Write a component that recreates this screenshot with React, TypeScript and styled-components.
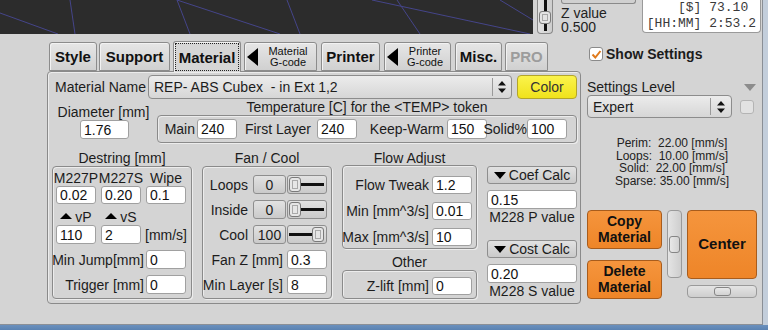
import styled, { createGlobalStyle } from 'styled-components'

const GlobalStyle = createGlobalStyle`
  html, body {
    margin: 0;
    padding: 0;
  }
  body {
    font-family: "Liberation Sans", Arial, sans-serif;
    font-size: 14px;
    color: #1c1c1c;
  }
`

const viewLines = [
  [0, 13, 58, 34],
  [70, 0, 75, 34],
  [177, 0, 190, 34],
  [177, 0, 280, 34],
  [287, 0, 300, 34],
  [372, 0, 530, 34],
  [397, 0, 420, 34],
  [500, 0, 533, 20],
]

const SelectArrows = () => (
  <svg width="8" height="12" viewBox="0 0 8 12">
    <path d="M0 4.5 L4 0 L8 4.5 Z M0 7.5 L8 7.5 L4 12 Z" fill="#111" />
  </svg>
)

const CheckMark = () => (
  <svg width="11" height="11" viewBox="0 0 11 11">
    <path d="M1.5 5.5 L4.3 8.5 L9.5 2" stroke="#e07a1c" strokeWidth="2" fill="none" />
  </svg>
)

const App = () => {
  return (
    <Frame>
      <GlobalStyle />
      <Window>
        <TopBar>
          <Viewport>
            <svg width="533" height="34">
              {viewLines.map(([x1, y1, x2, y2], i) => (
                <line key={i} x1={x1} y1={y1} x2={x2} y2={y2} stroke="#45458a" strokeWidth="1" />
              ))}
            </svg>
          </Viewport>
          <ZSlider>
            <ZTrack $h={11} />
            <ZThumb />
            <ZTrack $h={7} />
          </ZSlider>
          <ZInfo>
            <CutButton />
            <ZText>Z value</ZText>
            <ZText>0.500</ZText>
          </ZInfo>
          <StatsBox>{'[$] 73.10 \n[HH:MM] 2:53.2'}</StatsBox>
        </TopBar>

        <Body>
          <LeftCol>
            <Tabs>
              <Tab $w={48} $ml={0}>Style</Tab>
              <Tab $w={71} $ml={2}>Support</Tab>
              <Tab $w={68} $ml={3} $active>
                <FocusRing>Material</FocusRing>
              </Tab>
              <Tab $w={73} $ml={3}>
                <ArrowLeft />
                <SmallText>
                  Material
                  <br />
                  G-code
                </SmallText>
              </Tab>
              <Tab $w={59} $ml={4}>Printer</Tab>
              <Tab $w={67} $ml={4}>
                <ArrowLeft />
                <SmallText>
                  Printer
                  <br />
                  G-code
                </SmallText>
              </Tab>
              <Tab $w={47} $ml={4}>Misc.</Tab>
              <Tab $w={43} $ml={3} $disabled>PRO</Tab>
            </Tabs>

            <Panel>
              <Row $h={24}>
                <NameLabel>Material Name</NameLabel>
                <Select $w={364} $h={24}>
                  <SelectText>REP- ABS Cubex  - in Ext 1,2</SelectText>
                  <SelectDivider />
                  <SelectArrowBox $w={18}>
                    <SelectArrows />
                  </SelectArrowBox>
                </Select>
                <ColorButton>Color</ColorButton>
              </Row>

              <Row $h={40} $mt={4}>
                <DiameterCol>
                  <DiameterLabel>Diameter [mm]</DiameterLabel>
                  <Field $w={49} $h={19}>1.76</Field>
                </DiameterCol>
                <TempCol>
                  <TempTitle>Temperature [C] for the &lt;TEMP&gt; token</TempTitle>
                  <GroupBox $h={28} $row>
                    <InlineLabel $w={39} $pr={2}>Main</InlineLabel>
                    <Field $w={40} $h={20}>240</Field>
                    <InlineLabel $w={80} $pr={6}>First Layer</InlineLabel>
                    <Field $w={40} $h={20}>240</Field>
                    <InlineLabel $w={90} $pr={3}>Keep-Warm</InlineLabel>
                    <Field $w={40} $h={20}>150</Field>
                    <InlineLabel $w={40} $pr={0}>Solid%</InlineLabel>
                    <Field $w={40} $h={20}>100</Field>
                  </GroupBox>
                </TempCol>
              </Row>

              <Sections>
                <Section $w={140}>
                  <SectionTitle $h={16}>Destring [mm]</SectionTitle>
                  <GroupBox $h={133}>
                    <DestringInner>
                      <GridRow>
                        <Cell $h={16}>M227P</Cell>
                        <Cell $h={16}>M227S</Cell>
                        <Cell $h={16}>Wipe</Cell>
                      </GridRow>
                      <GridRow>
                        <Field $w={40} $h={18}>0.02</Field>
                        <Field $w={40} $h={18}>0.20</Field>
                        <Field $w={40} $h={18}>0.1</Field>
                      </GridRow>
                      <GridRow>
                        <Cell $h={21} $end>
                          <ArrowUp />
                          vP
                        </Cell>
                        <Cell $h={21} $end>
                          <ArrowUp />
                          vS
                        </Cell>
                        <Cell $h={21} />
                      </GridRow>
                      <GridRow>
                        <Field $w={40} $h={19}>110</Field>
                        <Field $w={40} $h={19}>2</Field>
                        <Cell $h={19}>[mm/s]</Cell>
                      </GridRow>
                      <GridRow $mt={6}>
                        <SpanLabel>Min Jump[mm]</SpanLabel>
                        <Field $w={40} $h={19}>0</Field>
                      </GridRow>
                      <GridRow $mt={6}>
                        <SpanLabel>Trigger [mm]</SpanLabel>
                        <Field $w={40} $h={19}>0</Field>
                      </GridRow>
                    </DestringInner>
                  </GroupBox>
                </Section>

                <Section $w={130}>
                  <SectionTitle $h={16}>Fan / Cool</SectionTitle>
                  <GroupBox $h={133}>
                    <StackInner $pt={8} $gap={6}>
                      <FormRow $h={19}>
                        <InlineLabel $w={50} $pr={5}>Loops</InlineLabel>
                        <SmallButton>0</SmallButton>
                        <HSliderFrame>
                          <SliderThumb />
                          <SliderLine />
                        </HSliderFrame>
                      </FormRow>
                      <FormRow $h={19}>
                        <InlineLabel $w={50} $pr={5}>Inside</InlineLabel>
                        <SmallButton>0</SmallButton>
                        <HSliderFrame>
                          <SliderThumb />
                          <SliderLine />
                        </HSliderFrame>
                      </FormRow>
                      <FormRow $h={19}>
                        <InlineLabel $w={50} $pr={5}>Cool</InlineLabel>
                        <SmallButton>100</SmallButton>
                        <HSliderFrame>
                          <SliderLine />
                          <SliderThumb />
                        </HSliderFrame>
                      </FormRow>
                      <FormRow $h={19}>
                        <InlineLabel $w={84} $pr={4}>Fan Z [mm]</InlineLabel>
                        <Field $w={40} $h={19}>0.3</Field>
                      </FormRow>
                      <FormRow $h={19}>
                        <InlineLabel $w={84} $pr={4}>Min Layer [s]</InlineLabel>
                        <Field $w={40} $h={19}>8</Field>
                      </FormRow>
                    </StackInner>
                  </GroupBox>
                </Section>

                <Section $w={135}>
                  <SectionTitle $h={15}>Flow Adjust</SectionTitle>
                  <GroupBox $h={84}>
                    <StackInner $pt={10} $gap={8}>
                      <FormRow $h={18}>
                        <InlineLabel $w={89} $pr={3}>Flow Tweak</InlineLabel>
                        <Field $w={40} $h={18}>1.2</Field>
                      </FormRow>
                      <FormRow $h={18}>
                        <InlineLabel $w={89} $pr={3}>Min [mm^3/s]</InlineLabel>
                        <Field $w={40} $h={18}>0.01</Field>
                      </FormRow>
                      <FormRow $h={18}>
                        <InlineLabel $w={89} $pr={3}>Max [mm^3/s]</InlineLabel>
                        <Field $w={40} $h={18}>10</Field>
                      </FormRow>
                    </StackInner>
                  </GroupBox>
                  <SectionTitle $h={21} $pt={5}>Other</SectionTitle>
                  <GroupBox $h={29}>
                    <StackInner $pt={6} $gap={0}>
                      <FormRow $h={18}>
                        <InlineLabel $w={89} $pr={3}>Z-lift [mm]</InlineLabel>
                        <Field $w={40} $h={18}>0</Field>
                      </FormRow>
                    </StackInner>
                  </GroupBox>
                </Section>

                <CalcCol>
                  <CalcButton>
                    <ArrowDown />
                    Coef Calc
                  </CalcButton>
                  <Field $w={90} $h={19} $mt={6}>0.15</Field>
                  <Caption>M228 P value</Caption>
                  <CalcButton $mt={15}>
                    <ArrowDown />
                    Cost Calc
                  </CalcButton>
                  <Field $w={90} $h={19} $mt={6}>0.20</Field>
                  <Caption>M228 S value</Caption>
                </CalcCol>
              </Sections>
            </Panel>
          </LeftCol>

          <RightCol>
            <ShowRow>
              <CheckBox>
                <CheckMark />
              </CheckBox>
              <BoldText>Show Settings</BoldText>
            </ShowRow>
            <LevelRow>
              <span>Settings Level</span>
              <GrayArrow />
            </LevelRow>
            <LevelSelectRow>
              <Select $w={145} $h={23}>
                <SelectText>Expert</SelectText>
                <SelectDivider />
                <SelectArrowBox $w={20}>
                  <SelectArrows />
                </SelectArrowBox>
              </Select>
              <CheckBox $disabled />
            </LevelSelectRow>
            <Speeds>
              <div>Perim:  22.00 [mm/s]</div>
              <div>Loops:  10.00 [mm/s]</div>
              <div>Solid:  22.00 [mm/s]</div>
              <div>Sparse: 35.00 [mm/s]</div>
            </Speeds>
            <ActionArea>
              <ButtonStack>
                <OrangeButton $w={75} $h={39}>
                  Copy
                  <br />
                  Material
                </OrangeButton>
                <OrangeButton $w={75} $h={39}>
                  Delete
                  <br />
                  Material
                </OrangeButton>
              </ButtonStack>
              <VSlider>
                <VThumb />
              </VSlider>
              <CenterStack>
                <OrangeButton $w={70} $h={69} $big>
                  Center
                </OrangeButton>
                <HScroll>
                  <HScrollThumb />
                </HScroll>
              </CenterStack>
            </ActionArea>
          </RightCol>
        </Body>
      </Window>
    </Frame>
  )
}
export default App

const Frame = styled.div`
  width: 768px;
  height: 330px;
  overflow: hidden;
  background: linear-gradient(to bottom, #c3cedb 0, #c3cedb 325px, #6a90bd 325px, #5a82b2 330px);
`

const Window = styled.div`
  width: 763px;
  height: 325px;
  box-sizing: border-box;
  background: #d4d4d4;
  border-right: 1px solid #8a8f96;
  border-bottom: 1px solid #8a8f96;
  display: flex;
  flex-direction: column;
`

const TopBar = styled.div`
  display: flex;
  height: 34px;
  flex-shrink: 0;
`

const Viewport = styled.div`
  width: 533px;
  height: 34px;
  background: #2c2c2c;
  svg {
    display: block;
  }
`

const ZSlider = styled.div`
  margin-left: 4px;
  width: 16px;
  height: 34px;
  box-sizing: border-box;
  border: 1px solid #8a8a8a;
  border-top: none;
  border-radius: 0 0 4px 4px;
  background: linear-gradient(to right, #e2e2e2, #cdcdcd);
  display: flex;
  flex-direction: column;
  align-items: center;
`

const ZTrack = styled.div<{ $h: number }>`
  width: 3px;
  height: ${(p) => p.$h}px;
  background: #111;
`

const ZThumb = styled.div`
  width: 12px;
  height: 13px;
  box-sizing: border-box;
  border: 1px solid #7a7a7a;
  border-radius: 3px;
  background: #e4e4e4;
  box-shadow: inset 0 0 0 2px #e4e4e4, inset 0 0 0 3px #a8a8a8;
`

const ZInfo = styled.div`
  margin-left: 8px;
  width: 81px;
  display: flex;
  flex-direction: column;
`

const CutButton = styled.div`
  width: 75px;
  height: 4px;
  box-sizing: border-box;
  border: 1px solid #8a8a8a;
  border-top: none;
  border-radius: 0 0 3px 3px;
  background: #d0d0d0;
  margin-bottom: 2px;
`

const ZText = styled.div`
  font-size: 14px;
  line-height: 14px;
  color: #222;
`

const StatsBox = styled.div`
  width: 119px;
  height: 33px;
  box-sizing: border-box;
  background: #fff;
  border: 1px solid #9a9a9a;
  border-top: none;
  border-radius: 0 0 4px 4px;
  padding-right: 4px;
  font-family: "Liberation Mono", "Courier New", monospace;
  font-size: 13px;
  line-height: 16px;
  text-align: right;
  white-space: pre;
  color: #3a3a3a;
`

const Body = styled.div`
  display: flex;
  padding-left: 47px;
  margin-top: 7px;
`

const LeftCol = styled.div`
  width: 534px;
  display: flex;
  flex-direction: column;
`

const Tabs = styled.div`
  display: flex;
  align-items: flex-end;
  height: 30px;
  padding-left: 2px;
`

const Tab = styled.div<{ $w: number; $ml: number; $active?: boolean; $disabled?: boolean }>`
  position: relative;
  z-index: ${(p) => (p.$active ? 2 : 1)};
  width: ${(p) => p.$w}px;
  height: ${(p) => (p.$active ? 31 : 29)}px;
  margin-left: ${(p) => p.$ml}px;
  margin-bottom: ${(p) => (p.$active ? -1 : 0)}px;
  box-sizing: border-box;
  border: 1px solid #8c8c8c;
  border-bottom: ${(p) => (p.$active ? 'none' : '1px solid #8c8c8c')};
  border-radius: 3px 3px 0 0;
  background: ${(p) => (p.$active ? '#d6d6d6' : 'linear-gradient(#e6e6e6, #d0d0d0)')};
  box-shadow: inset 1px 1px 0 #f2f2f2;
  display: flex;
  align-items: center;
  justify-content: center;
  font-size: 15px;
  font-weight: bold;
  color: ${(p) => (p.$disabled ? '#9c9c9c' : '#111')};
  white-space: nowrap;
`

const FocusRing = styled.div`
  align-self: stretch;
  flex: 1;
  margin: 1px 1px 1px;
  border: 1px dotted #222;
  display: flex;
  align-items: center;
  justify-content: center;
`

const ArrowLeft = styled.span`
  width: 0;
  height: 0;
  margin-left: 2px;
  border-top: 9px solid transparent;
  border-bottom: 9px solid transparent;
  border-right: 11px solid #000;
`

const SmallText = styled.div`
  flex: 1;
  font-size: 11px;
  font-weight: normal;
  line-height: 11px;
  text-align: center;
  padding-left: 2px;
`

const Panel = styled.div`
  width: 534px;
  height: 233px;
  box-sizing: border-box;
  border: 1px solid #8a8a8a;
  border-radius: 4px;
  box-shadow: inset 1px 1px 0 #ececec;
  padding: 3px 3px 0 4px;
  display: flex;
  flex-direction: column;
`

const Row = styled.div<{ $h: number; $mt?: number }>`
  display: flex;
  align-items: center;
  height: ${(p) => p.$h}px;
  margin-top: ${(p) => p.$mt ?? 0}px;
`

const NameLabel = styled.div`
  width: 96px;
  padding-left: 3px;
  box-sizing: border-box;
  white-space: nowrap;
`

const Select = styled.div<{ $w: number; $h: number }>`
  width: ${(p) => p.$w}px;
  height: ${(p) => p.$h}px;
  box-sizing: border-box;
  border: 1px solid #8c8c8c;
  border-radius: 4px;
  background: linear-gradient(#ececec, #d6d6d6);
  display: flex;
  align-items: center;
`

const SelectText = styled.div`
  flex: 1;
  padding-left: 5px;
  white-space: pre;
  font-size: 14px;
`

const SelectDivider = styled.div`
  width: 1px;
  align-self: stretch;
  margin: 2px 0;
  background: #9a9a9a;
`

const SelectArrowBox = styled.div<{ $w: number }>`
  width: ${(p) => p.$w}px;
  display: flex;
  justify-content: center;
  svg {
    display: block;
  }
`

const ColorButton = styled.div`
  margin-left: 5px;
  width: 60px;
  height: 24px;
  box-sizing: border-box;
  border: 1px solid #b3a52a;
  border-radius: 4px;
  background: linear-gradient(#fbf34c, #f0e21c);
  display: flex;
  align-items: center;
  justify-content: center;
  color: #333;
`

const DiameterCol = styled.div`
  width: 105px;
  align-self: stretch;
  display: flex;
  flex-direction: column;
  align-items: center;
  padding-top: 1px;
`

const DiameterLabel = styled.div`
  line-height: 16px;
  white-space: nowrap;
  padding-right: 2px;
`

const TempCol = styled.div`
  width: 420px;
  align-self: stretch;
  display: flex;
  flex-direction: column;
`

const TempTitle = styled.div`
  height: 16px;
  line-height: 16px;
  margin-top: -4px;
  text-align: center;
  white-space: nowrap;
`

const GroupBox = styled.div<{ $h: number; $row?: boolean }>`
  height: ${(p) => p.$h}px;
  box-sizing: border-box;
  border: 1px solid #8a8a8a;
  border-radius: 4px;
  box-shadow: inset 1px 1px 0 #ececec, 1px 1px 0 #ececec;
  display: flex;
  flex-direction: ${(p) => (p.$row ? 'row' : 'column')};
  align-items: ${(p) => (p.$row ? 'center' : 'stretch')};
`

const InlineLabel = styled.div<{ $w: number; $pr: number }>`
  width: ${(p) => p.$w}px;
  flex-shrink: 0;
  box-sizing: border-box;
  padding-right: ${(p) => p.$pr}px;
  display: flex;
  justify-content: flex-end;
  white-space: nowrap;
`

const Field = styled.div<{ $w: number; $h: number; $mt?: number }>`
  width: ${(p) => p.$w}px;
  height: ${(p) => p.$h}px;
  margin-top: ${(p) => p.$mt ?? 0}px;
  flex-shrink: 0;
  box-sizing: border-box;
  background: #fff;
  border: 1px solid #a0a0a0;
  border-radius: 3px;
  padding-left: 3px;
  display: flex;
  align-items: center;
  font-size: 14px;
  color: #111;
`

const Sections = styled.div`
  display: flex;
  gap: 10px;
  margin-top: 7px;
`

const Section = styled.div<{ $w: number }>`
  width: ${(p) => p.$w}px;
  display: flex;
  flex-direction: column;
`

const SectionTitle = styled.div<{ $h: number; $pt?: number }>`
  height: ${(p) => p.$h}px;
  box-sizing: border-box;
  padding-top: ${(p) => p.$pt ?? 0}px;
  line-height: 16px;
  text-align: center;
  white-space: nowrap;
`

const DestringInner = styled.div`
  padding: 3px 0 0 3px;
  display: flex;
  flex-direction: column;
`

const GridRow = styled.div<{ $mt?: number }>`
  display: grid;
  grid-template-columns: 40px 40px 40px;
  column-gap: 5px;
  margin-top: ${(p) => p.$mt ?? 0}px;
`

const Cell = styled.div<{ $h: number; $end?: boolean }>`
  height: ${(p) => p.$h}px;
  line-height: 16px;
  display: flex;
  justify-content: center;
  align-items: ${(p) => (p.$end ? 'flex-end' : 'center')};
  white-space: nowrap;
`

const ArrowUp = styled.span`
  width: 0;
  height: 0;
  border-left: 6px solid transparent;
  border-right: 6px solid transparent;
  border-bottom: 6px solid #000;
  margin: 0 3px 6px 0;
`

const SpanLabel = styled.div`
  grid-column: 1 / 3;
  justify-self: end;
  margin-right: -3px;
  white-space: nowrap;
  display: flex;
  align-items: center;
`

const StackInner = styled.div<{ $pt: number; $gap: number }>`
  padding-top: ${(p) => p.$pt}px;
  display: flex;
  flex-direction: column;
  gap: ${(p) => p.$gap}px;
`

const FormRow = styled.div<{ $h: number }>`
  display: flex;
  align-items: center;
  height: ${(p) => p.$h}px;
`

const SmallButton = styled.div`
  width: 33px;
  height: 19px;
  box-sizing: border-box;
  border: 1px solid #8e8e8e;
  border-radius: 3px;
  background: linear-gradient(#e2e2e2, #cacaca);
  display: flex;
  align-items: center;
  justify-content: center;
`

const HSliderFrame = styled.div`
  margin-left: 1px;
  width: 40px;
  height: 19px;
  box-sizing: border-box;
  border: 1px solid #8e8e8e;
  border-radius: 3px;
  background: linear-gradient(#e2e2e2, #cacaca);
  padding: 0 2px 0 1px;
  display: flex;
  align-items: center;
`

const SliderThumb = styled.div`
  width: 12px;
  height: 15px;
  flex-shrink: 0;
  box-sizing: border-box;
  border: 1px solid #7a7a7a;
  border-radius: 3px;
  background: #e6e6e6;
  box-shadow: inset 0 0 0 2px #e6e6e6, inset 0 0 0 3px #a9a9a9;
`

const SliderLine = styled.div`
  flex: 1;
  height: 3px;
  background: #111;
`

const CalcCol = styled.div`
  width: 90px;
  padding-top: 16px;
  display: flex;
  flex-direction: column;
`

const CalcButton = styled.div<{ $mt?: number }>`
  margin-top: ${(p) => p.$mt ?? 0}px;
  height: 18px;
  box-sizing: border-box;
  border: 1px solid #8e8e8e;
  border-radius: 3px;
  background: linear-gradient(#e2e2e2, #cacaca);
  display: flex;
  align-items: center;
  justify-content: center;
  gap: 3px;
  white-space: nowrap;
`

const ArrowDown = styled.span`
  width: 0;
  height: 0;
  border-left: 6px solid transparent;
  border-right: 6px solid transparent;
  border-top: 7px solid #000;
`

const Caption = styled.div`
  line-height: 16px;
  text-align: center;
  white-space: nowrap;
`

const RightCol = styled.div`
  margin-left: 6px;
  width: 170px;
  display: flex;
  flex-direction: column;
`

const ShowRow = styled.div`
  margin-top: 5px;
  height: 16px;
  display: flex;
  align-items: center;
  padding-left: 2px;
`

const CheckBox = styled.div<{ $disabled?: boolean }>`
  width: 14px;
  height: 14px;
  box-sizing: border-box;
  border: 1px solid ${(p) => (p.$disabled ? '#b4b4b4' : '#8a8a8a')};
  border-radius: 3px;
  background: ${(p) => (p.$disabled ? '#e2e2e2' : '#fff')};
  display: flex;
  align-items: center;
  justify-content: center;
  margin-left: ${(p) => (p.$disabled ? 8 : 0)}px;
  svg {
    display: block;
  }
`

const BoldText = styled.span`
  margin-left: 3px;
  font-weight: bold;
  font-size: 14px;
  white-space: nowrap;
`

const LevelRow = styled.div`
  margin-top: 17px;
  height: 16px;
  line-height: 16px;
  display: flex;
  align-items: center;
  justify-content: space-between;
`

const GrayArrow = styled.span`
  width: 0;
  height: 0;
  margin-right: 1px;
  border-left: 6px solid transparent;
  border-right: 6px solid transparent;
  border-top: 7px solid #8c8c8c;
`

const LevelSelectRow = styled.div`
  display: flex;
  align-items: center;
`

const Speeds = styled.div`
  margin-top: 19px;
  font-size: 12px;
  line-height: 12.7px;
  text-align: center;
  white-space: pre;
  color: #222;
`

const ActionArea = styled.div`
  margin-top: 22px;
  display: flex;
  gap: 5px;
`

const ButtonStack = styled.div`
  display: flex;
  flex-direction: column;
  gap: 11px;
`

const OrangeButton = styled.div<{ $w: number; $h: number; $big?: boolean }>`
  width: ${(p) => p.$w}px;
  height: ${(p) => p.$h}px;
  box-sizing: border-box;
  border: 1px solid #a85c1c;
  border-radius: 4px;
  background: linear-gradient(#f5953d, #ee8528);
  display: flex;
  align-items: center;
  justify-content: center;
  text-align: center;
  font-weight: bold;
  font-size: ${(p) => (p.$big ? 15 : 14)}px;
  line-height: 16px;
  color: #111;
`

const VSlider = styled.div`
  width: 15px;
  height: 68px;
  box-sizing: border-box;
  border: 1px solid #9a9a9a;
  border-radius: 4px;
  background: linear-gradient(to right, #e4e4e4, #cecece);
  display: flex;
  flex-direction: column;
  align-items: center;
  padding-top: 25px;
`

const VThumb = styled.div`
  width: 11px;
  height: 17px;
  box-sizing: border-box;
  border: 1px solid #858585;
  border-radius: 3px;
  background: linear-gradient(to right, #e8e8e8, #d2d2d2);
`

const CenterStack = styled.div`
  display: flex;
  flex-direction: column;
`

const HScroll = styled.div`
  margin-top: 6px;
  width: 70px;
  height: 13px;
  box-sizing: border-box;
  border: 1px solid #9a9a9a;
  border-radius: 4px;
  background: linear-gradient(#e4e4e4, #cecece);
  display: flex;
  align-items: center;
  padding-left: 26px;
`

const HScrollThumb = styled.div`
  width: 17px;
  height: 9px;
  box-sizing: border-box;
  border: 1px solid #858585;
  border-radius: 3px;
  background: linear-gradient(#e8e8e8, #d2d2d2);
`
